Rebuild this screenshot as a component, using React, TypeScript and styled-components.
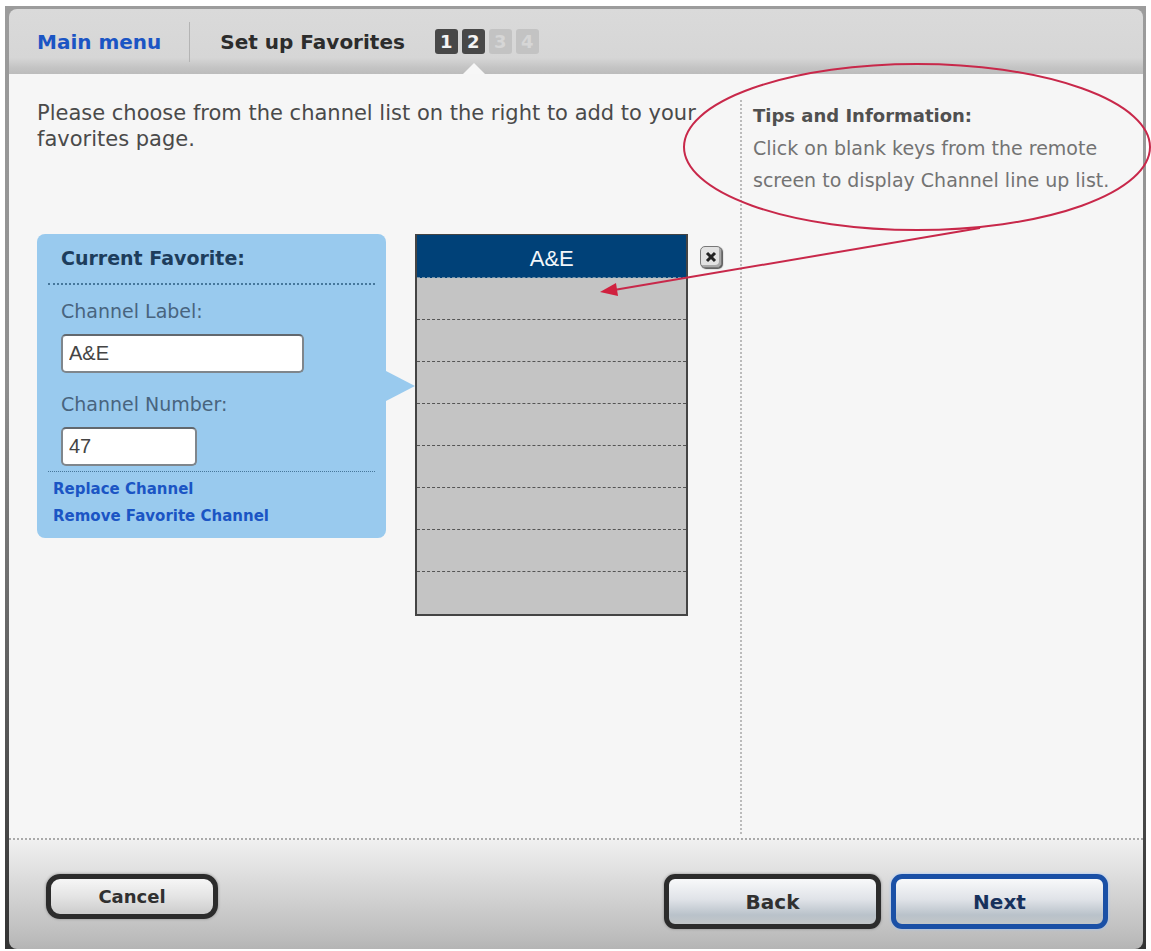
import React from 'react';
import styled, { createGlobalStyle, css } from 'styled-components';

const GlobalStyle = createGlobalStyle`
  * { box-sizing: border-box; }
  body {
    margin: 0;
    background: #fff;
    color: #4a4a4a;
    font-family: "DejaVu Sans", Verdana, sans-serif;
    font-size: 20px;
  }
  h1, h2, p, ul, ol { margin: 0; padding: 0; }
  ul, ol { list-style: none; }
  a { color: #1b55c4; text-decoration: none; }
`;

const Frame = styled.div`
  position: relative;
  display: flex;
  flex-direction: column;
  min-height: calc(100vh - 8px);
  margin: 6px 5px 2px;
  padding: 3px 3px 0 4px;
  background: linear-gradient(#9c9c9c, #8f8f8f 40%, #333);
`;

const Header = styled.header`
  display: flex;
  align-items: center;
  height: 65px;
  padding: 0 28px;
  border-radius: 8px 8px 0 0;
  background: linear-gradient(#dadada, #d6d6d6 75%, #c4c4c4 90%, #bcbcbc);
  font-weight: bold;
`;

const MenuLink = styled.a`
  padding: 8px 28px 8px 0;
  border-right: 1px solid #b4b4b4;
`;

const Title = styled.h1`
  padding-left: 30px;
  color: #2c2c2c;
  font-size: 20px;
`;

const Steps = styled.ol`
  display: flex;
  gap: 4px;
  padding-left: 30px;
`;

const Step = styled.li<{ $on?: boolean; $current?: boolean }>`
  position: relative;
  width: 23px;
  height: 25px;
  border-radius: 3px;
  background: ${p => (p.$on ? '#484848' : '#c3c3c3')};
  color: ${p => (p.$on ? '#f4f4f4' : '#d6d6d6')};
  font-size: 18px;
  line-height: 25px;
  text-align: center;
  ${p => p.$current && css`
    &::after {
      content: '';
      position: absolute;
      top: 34px;
      left: 1px;
      border: 11px solid transparent;
      border-top: 0;
      border-bottom-color: #f7f7f7;
    }
  `}
`;

const Body = styled.div`
  display: flex;
  flex: 1;
  padding: 26px 0 4px;
  border-bottom: 2px dotted #aaa;
  background: #f6f6f6;
`;

const Main = styled.main`
  flex: 1;
  min-width: 0;
  padding: 0 18px 0 28px;
`;

const Intro = styled.p`
  font-size: 21px;
  line-height: 26px;
`;

const Editor = styled.div`
  display: flex;
  align-items: flex-start;
  margin-top: 82px;
`;

const Card = styled.form`
  position: relative;
  width: 350px;
  margin-right: 29px;
  padding: 0 11px 8px;
  border-radius: 8px;
  background: #99caee;
  &::after {
    content: '';
    position: absolute;
    top: 137px;
    left: 100%;
    border: 15px solid transparent;
    border-left: 29px solid #99caee;
    border-right: 0;
  }
`;

const CardTitle = styled.h2`
  padding: 0 13px;
  border-bottom: 2px dotted #46779b;
  color: #1d3d5c;
  font-size: 19px;
  line-height: 49px;
`;

const Fields = styled.div`
  display: flex;
  flex-direction: column;
  align-items: flex-start;
  padding: 9px 13px 5px;
  border-bottom: 1px dotted #46779b;
`;

const Label = styled.label`
  color: #48647e;
  font-size: 19px;
  line-height: 34px;
`;

const TextBox = styled.input<{ $short?: boolean }>`
  width: ${p => (p.$short ? 136 : 243)}px;
  height: 39px;
  margin: 6px 0 0;
  padding: 0 6px;
  border: 2px solid #7f868c;
  border-top-color: #62686e;
  border-radius: 5px;
  background: #fff;
  color: #444;
  font: 20px "Liberation Sans", Arial, sans-serif;
  & + label { margin-top: 14px; }
`;

const CardLinks = styled.div`
  display: flex;
  flex-direction: column;
  align-items: flex-start;
  padding: 4px 5px 0;
  font-size: 15px;
  font-weight: bold;
  line-height: 27px;
`;

const Favorites = styled.ul`
  width: 273px;
  border: solid #444;
  border-width: 1px 2px 2px;
  background: #c4c4c4;
  font-family: "Liberation Sans", Arial, sans-serif;
`;

const Favorite = styled.li<{ $selected?: boolean }>`
  height: 42px;
  border-bottom: 1px dashed #555;
  line-height: 48px;
  text-align: center;
  &:last-child { border-bottom: 0; }
  ${p => p.$selected && css`
    height: 43px;
    border-bottom: 1px dashed #7896ac;
    background: #004178;
    color: #f2f6fa;
    font-size: 22px;
  `}
`;

const RemoveButton = styled.button`
  display: flex;
  align-items: center;
  justify-content: center;
  width: 22px;
  height: 22px;
  margin: 12px 0 0 12px;
  padding: 0;
  border: 1px solid #777;
  border-radius: 5px;
  background: #e2e2e2;
  box-shadow: inset -2px -2px 0 #a8a8a8, 1px 1px 1px #555;
  cursor: pointer;
`;

const Tips = styled.aside`
  flex: none;
  width: 403px;
  padding: 0 10px 0 11px;
  border-left: 2px dotted #bbb;
  color: #737373;
  font-size: 19px;
  line-height: 32px;
`;

const TipsTitle = styled.h2`
  color: #505050;
  font-size: 18px;
`;

const Footer = styled.footer`
  display: flex;
  align-items: flex-start;
  gap: 10px;
  height: 109px;
  padding: 34px 35px 0 37px;
  border-radius: 0 0 8px 8px;
  background: linear-gradient(#f0f0f0, #e2e2e2 25%, #bcbcbc 90%, #b4b4b4);
`;

const Button = styled.button<{ $small?: boolean; $primary?: boolean }>`
  width: ${p => (p.$small ? 172 : 217)}px;
  height: ${p => (p.$small ? 45 : 55)}px;
  padding: 0;
  border: 5px solid ${p => (p.$primary ? '#1a50a6' : '#2c2c2c')};
  border-radius: ${p => (p.$small ? 14 : 11)}px;
  background: ${p => (p.$small
    ? 'linear-gradient(#f6f6f6, #e4e4e4 50%, #cccccc)'
    : 'linear-gradient(#f8f9fa, #e0e3e8 45%, #b9c2ca 80%, #c2c6c8)')};
  box-shadow: 0 0 3px ${p => (p.$primary ? '#9cc4ff' : '#888')};
  color: ${p => (p.$primary ? '#17315c' : '#303030')};
  font: bold ${p => (p.$small ? 18 : 20)}px "DejaVu Sans", Verdana, sans-serif;
  cursor: pointer;
  ${p => p.$small && css`margin-right: auto;`}
`;

const Callout = styled.svg`
  position: absolute;
  top: 54px;
  right: -5px;
  pointer-events: none;
`;

const steps = [1, 2, 3, 4];
const currentStep = 2;
const favorites = ['A&E', '', '', '', '', '', '', '', ''];

export default function App() {
  return (
    <>
      <GlobalStyle />
      <Frame>
        <Header>
          <MenuLink href="#menu">Main menu</MenuLink>
          <Title>Set up Favorites</Title>
          <Steps>
            {steps.map(n => (
              <Step key={n} $on={n <= currentStep} $current={n === currentStep}>{n}</Step>
            ))}
          </Steps>
        </Header>
        <Body>
          <Main>
            <Intro>
              Please choose from the channel list on the right to add to your favorites page.
            </Intro>
            <Editor>
              <Card onSubmit={e => e.preventDefault()}>
                <CardTitle>Current Favorite:</CardTitle>
                <Fields>
                  <Label htmlFor="channel-label">Channel Label:</Label>
                  <TextBox id="channel-label" defaultValue="A&E" />
                  <Label htmlFor="channel-number">Channel Number:</Label>
                  <TextBox id="channel-number" defaultValue="47" $short />
                </Fields>
                <CardLinks>
                  <a href="#replace">Replace Channel</a>
                  <a href="#remove">Remove Favorite Channel</a>
                </CardLinks>
              </Card>
              <Favorites>
                {favorites.map((name, i) => (
                  <Favorite key={i} $selected={i === 0}>{name}</Favorite>
                ))}
              </Favorites>
              <RemoveButton type="button" aria-label="Remove favorite">
                <svg width="12" height="12" viewBox="0 0 12 12">
                  <path d="M2 2 L10 10 M10 2 L2 10" stroke="#222" strokeWidth="3" />
                </svg>
              </RemoveButton>
            </Editor>
          </Main>
          <Tips>
            <TipsTitle>Tips and Information:</TipsTitle>
            <p>Click on blank keys from the remote screen to display Channel line up list.</p>
          </Tips>
        </Body>
        <Footer>
          <Button type="button" $small>Cancel</Button>
          <Button type="button">Back</Button>
          <Button type="button" $primary>Next</Button>
        </Footer>
        <Callout width="553" height="242" viewBox="0 0 553 242" aria-hidden="true">
          <g fill="none" stroke="#c8284a" strokeWidth="2">
            <ellipse cx="319" cy="87" rx="233" ry="83" />
            <path d="M382 168 L16 230" />
          </g>
          <path d="M2 232 L18 223 L20 236 Z" fill="#d0213f" />
        </Callout>
      </Frame>
    </>
  );
}
